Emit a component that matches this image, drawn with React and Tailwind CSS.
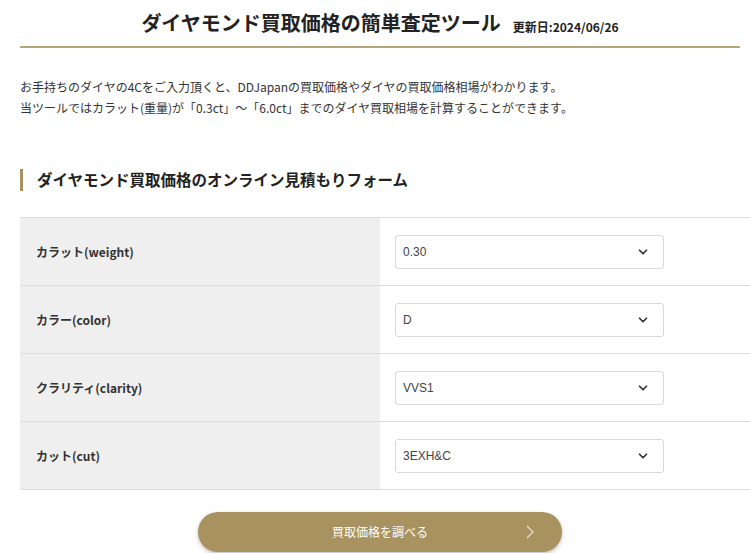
import React from "react";

const font = { fontFamily: '"Noto Sans CJK JP", "Noto Sans", sans-serif' };

function Chevron() {
  return (
    <svg width="14" height="14" viewBox="0 0 24 24" fill="none" stroke="#333" strokeWidth="3" strokeLinecap="round" strokeLinejoin="round">
      <path d="M6 9l6 6 6-6" />
    </svg>
  );
}

const rows = [
  ["カラット(weight)", "0.30"],
  ["カラー(color)", "D"],
  ["クラリティ(clarity)", "VVS1"],
  ["カット(cut)", "3EXH&C"],
];

export default function App() {
  return (
    <div className="w-[750px] h-[553px] overflow-hidden bg-white text-[#333]" style={font}>
      <div className="ml-[20px] w-[720px]">
        <div className="flex items-end justify-center gap-3 pt-[8px] h-[48px] pb-[10px] border-b-2 border-[#b5a57c]">
          <h1 className="text-[20px] font-bold leading-[26px] text-[#222]">ダイヤモンド買取価格の簡単査定ツール</h1>
          <span className="text-[12px] font-bold leading-[18px] text-[#222]">更新日:2024/06/26</span>
        </div>
        <div className="pt-[28px] text-[12px] leading-[21px] text-[#333]">
          <p>お手持ちのダイヤの4Cをご入力頂くと、DDJapanの買取価格やダイヤの買取価格相場がわかります。</p>
          <p>当ツールではカラット(重量)が「0.3ct」〜「6.0ct」までのダイヤ買取相場を計算することができます。</p>
        </div>
        <div className="mt-[51px] flex items-center h-[22px]">
          <div className="w-[3px] h-[22px] bg-[#a8925f]" />
          <h2 className="ml-[14px] text-[15.5px] font-bold text-[#222]">ダイヤモンド買取価格のオンライン見積もりフォーム</h2>
        </div>
      </div>
      <div className="ml-[20px] w-[730px] mt-[26px] border-t border-[#dcdcdc]">
        {rows.map(([label, value]) => (
          <div key={label} className="flex h-[68px] border-b border-[#dcdcdc]">
            <div className="w-[360px] bg-[#efefef] flex items-center pl-[16px] text-[12px] font-bold text-[#333]">{label}</div>
            <div className="flex-1 flex items-center pl-[15px]">
              <div className="w-[269px] h-[34px] border border-[#d8d8d8] rounded-[3px] flex items-center justify-between pl-[7px] pr-[13px] text-[12px] text-[#444] bg-white" style={{ fontFamily: '"Liberation Sans", Arial, sans-serif' }}>
                <span>{value}</span>
                <Chevron />
              </div>
            </div>
          </div>
        ))}
      </div>
      <div className="ml-[20px] w-[720px] mt-[22px] flex justify-center">
        <button className="relative w-[364px] h-[40px] rounded-full bg-[#a8925f] text-white text-[12px] flex items-center justify-center shadow-[0_2px_4px_rgba(0,0,0,0.25)]">
          <span>買取価格を調べる</span>
          <svg className="absolute right-[27px] top-1/2 -translate-y-1/2" width="10" height="16" viewBox="0 0 10 16" fill="none" stroke="#e8e0cc" strokeWidth="1.2">
            <path d="M2 2l6 6-6 6" />
          </svg>
        </button>
      </div>
    </div>
  );
}
